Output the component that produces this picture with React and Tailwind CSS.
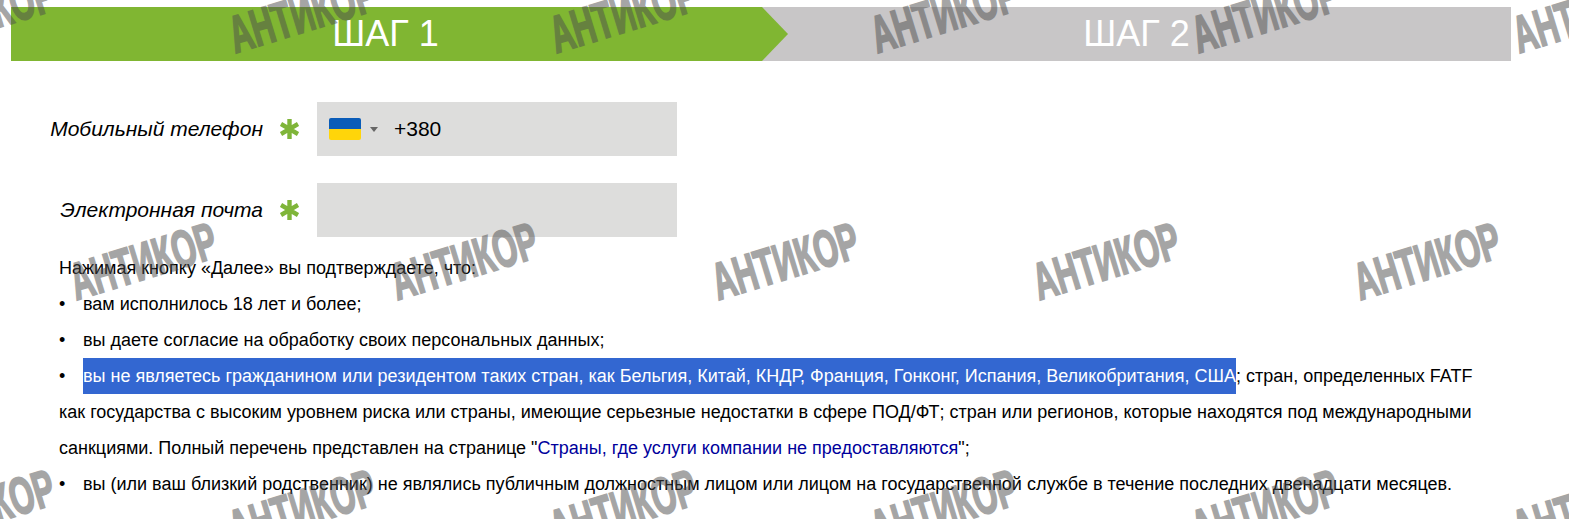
import React from "react";

const WATERMARKS = [];
[
  { y: 14, xs: [-19, 302, 623, 944, 1265, 1586] },
  { y: 261, xs: [143, 464, 785, 1106, 1427] },
  { y: 508, xs: [-19, 302, 623, 944, 1265, 1586] },
].forEach((row) => row.xs.forEach((x) => WATERMARKS.push({ x, y: row.y })));

function Asterisk() {
  return (
    <span className="flex w-[54px] justify-center pr-[1px]">
      <svg width="19" height="20" viewBox="0 0 19 20" stroke="#7fb539" strokeWidth="4.4" aria-hidden="true">
        <path d="M9.5 0V20M1 5L18 15M18 5L1 15" />
      </svg>
    </span>
  );
}

function Bullet() {
  return <span className="inline-block w-[24px]">•</span>;
}

export default function App() {
  return (
    <div className="relative h-[519px] w-[1569px] overflow-hidden bg-white font-['Liberation_Sans',Arial,sans-serif] text-black">
      {/* step bar */}
      <div className="px-[11px] pt-[7px]">
        <div className="flex h-[54px] w-[1500px] bg-[#c8c6c7] text-[36px] leading-[54px] text-white">
          <div className="relative w-[751px] bg-[#80b632] text-center">
            <span className="relative left-[-1px]">ШАГ 1</span>
            <div className="absolute top-0 left-full h-0 w-0 border-y-[27px] border-l-[26px] border-y-transparent border-l-[#80b632]" />
          </div>
          <div className="flex-1 text-center">
            <span>ШАГ 2</span>
          </div>
        </div>
      </div>

      {/* form */}
      <div className="mt-[41px] flex flex-col gap-[27px] pl-[11px]">
        <div className="flex items-center">
          <label className="w-[252px] text-right text-[21px] italic">Мобильный телефон</label>
          <Asterisk />
          <div className="flex h-[54px] w-[360px] items-center bg-[#dddddc] pl-[12px]">
            <div className="flex h-[22px] w-[32px] flex-col overflow-hidden rounded-[2px]">
              <div className="flex-1 bg-[#0a5cb8]" />
              <div className="flex-1 bg-[#ffd50a]" />
            </div>
            <div className="ml-[9px] h-0 w-0 border-x-[4px] border-t-[5px] border-x-transparent border-t-[#666]" />
            <span className="ml-[16px] text-[21px]">+380</span>
          </div>
        </div>
        <div className="flex items-center">
          <label className="w-[252px] text-right text-[21px] italic">Электронная почта</label>
          <Asterisk />
          <div className="h-[54px] w-[360px] bg-[#dddddc]" />
        </div>
      </div>

      {/* terms */}
      <div className="mt-[13px] ml-[59px] w-[1418px] text-[18px] leading-[36px]">
        <p>Нажимая кнопку «Далее» вы подтверждаете, что:</p>
        <ul>
          <li><Bullet />вам исполнилось 18 лет и более;</li>
          <li><Bullet />вы даете согласие на обработку своих персональных данных;</li>
          <li>
            <Bullet />
            <span className="inline-block bg-[#3367d1] text-white">вы не являетесь гражданином или резидентом таких стран, как Бельгия, Китай, КНДР, Франция, Гонконг, Испания, Великобритания, США</span>
            ; стран, определенных FATF как государства с высоким уровнем риска или страны, имеющие серьезные недостатки в сфере ПОД/ФТ; стран или регионов, которые находятся под международными санкциями. Полный перечень представлен на странице "<a className="text-[#00009c]">Страны, где услуги компании не предоставляются</a>";
          </li>
          <li><Bullet />вы (или ваш близкий родственник) не являлись публичным должностным лицом или лицом на государственной службе в течение последних двенадцати месяцев.</li>
        </ul>
      </div>

      {/* watermark layer */}
      {WATERMARKS.map((m) => (
        <span
          key={`${m.x}-${m.y}`}
          className="pointer-events-none absolute -translate-x-1/2 -translate-y-1/2 -rotate-[17deg] scale-x-[0.6] text-[52px] leading-none font-bold whitespace-nowrap text-[#4d4d4d] opacity-50 [-webkit-text-stroke:2px_#4d4d4d]"
          style={{ left: m.x, top: m.y }}
        >
          АНТИКОР
        </span>
      ))}
    </div>
  );
}
